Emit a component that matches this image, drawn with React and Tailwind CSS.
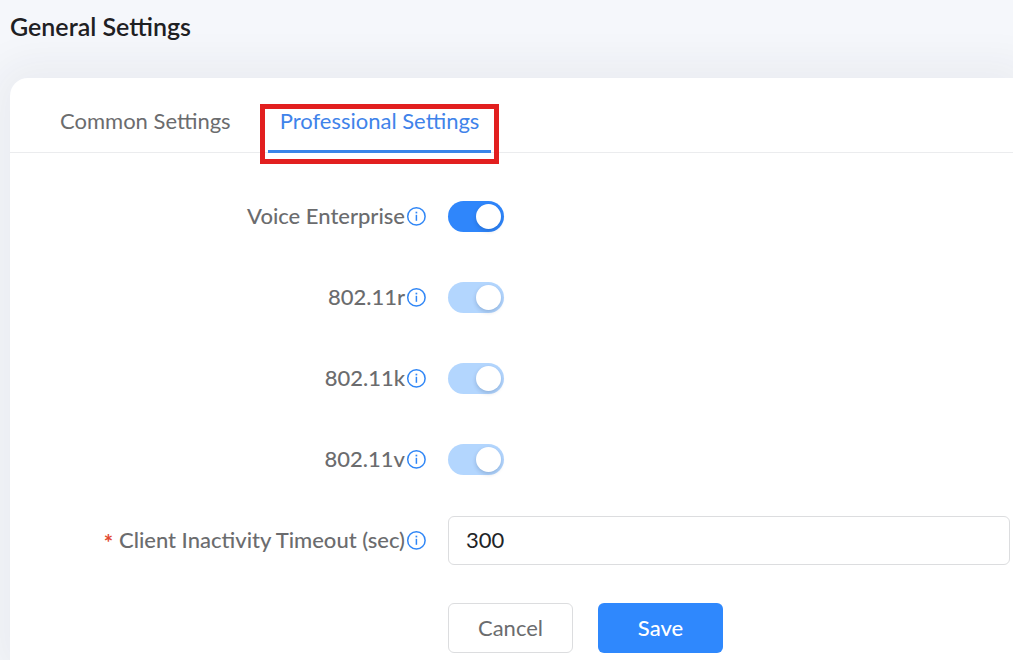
import { useState } from 'react';

const InfoIcon = () => (
	<svg
		className="size-5 shrink-0 text-[#2f86f6]"
		viewBox="0 0 20 20"
		fill="none"
		stroke="currentColor"
		strokeWidth="1.5"
		aria-hidden="true"
	>
		<circle cx="10.4" cy="10.4" r="8.7" />
		<path d="M10.4 8.8v6" />
		<path d="M10.4 5.7v1.7" strokeWidth="1.7" />
	</svg>
);

const FieldLabel = ({ htmlFor, required, children }) => (
	<label
		htmlFor={htmlFor}
		className="flex items-center justify-end pb-0.5 text-[22px] leading-7 font-medium text-[#6b6c6e]"
	>
		{required && (
			<span className="mr-1.5 pt-1.5 font-bold text-[#e2492f]">*</span>
		)}
		<span className="mr-px">{children}</span>
		<InfoIcon />
	</label>
);

const Toggle = ({ id, checked, disabled, onChange }) => (
	<input
		id={id}
		type="checkbox"
		role="switch"
		checked={checked}
		disabled={disabled}
		onChange={onChange}
		className="flex h-[31px] w-14 appearance-none items-center rounded-full bg-gray-300 px-[3px]
			before:size-[25px] before:rounded-full before:bg-white before:shadow-[0_2px_4px_rgba(0,35,80,0.2)]
			checked:justify-end checked:bg-[#2f86fb] disabled:checked:bg-[#b3d6fe]
		"
	/>
);

const App = () => {
	const [voiceEnterprise, setVoiceEnterprise] = useState(true);
	const [timeout, setTimeoutValue] = useState('300');

	// 802.11r/k/v follow Voice Enterprise and can't be changed while it is on
	const [standards, setStandards] = useState({
		'802.11r': true,
		'802.11k': true,
		'802.11v': true
	});

	return (
		<div className="flex min-h-screen flex-col bg-[#f5f7fb] font-['Lato',sans-serif]">
			<header className="px-[10px] pt-[10px] pb-9">
				<h1 className="text-[25px] leading-8 font-semibold text-[#1e2023]">
					General Settings
				</h1>
			</header>

			<main className="ml-[10px] grow rounded-tl-[18px] bg-white shadow-[0_0_40px_16px_rgba(40,40,60,0.05)]">
				<nav className="flex gap-[25px] border-b border-[#ebecee] pl-[38px] text-[22px] leading-7">
					<a href="#common" className="px-3 pt-[29px] pb-[17px] text-[#6b6c6e]">
						Common Settings
					</a>
					<a
						href="#professional"
						aria-current="page"
						className="relative -mb-px border-b-3 border-[#3a85e8] px-3 pt-[29px] pb-[15px] text-[#3f83ea]"
					>
						Professional Settings
						<span className="absolute -inset-x-2 top-[26px] -bottom-[14px] border-5 border-[#e21f1f]" />
					</a>
				</nav>

				<form
					className="pt-[39px] pr-[3px] pb-[7px]"
					onSubmit={e => e.preventDefault()}
				>
					<div className="grid auto-rows-[49px] grid-cols-[416px_1fr] items-center gap-x-[22px] gap-y-8">
						<FieldLabel htmlFor="voice">Voice Enterprise</FieldLabel>
						<Toggle
							id="voice"
							checked={voiceEnterprise}
							onChange={e => setVoiceEnterprise(e.target.checked)}
						/>

						{Object.keys(standards).map(name => (
							<div className="col-span-2 grid grid-cols-subgrid items-center" key={name}>
								<FieldLabel htmlFor={name}>{name}</FieldLabel>
								<Toggle
									id={name}
									checked={standards[name]}
									disabled={voiceEnterprise}
									onChange={e =>
										setStandards({ ...standards, [name]: e.target.checked })
									}
								/>
							</div>
						))}

						<FieldLabel htmlFor="timeout" required>
							Client Inactivity Timeout (sec)
						</FieldLabel>
						<input
							id="timeout"
							type="text"
							value={timeout}
							onChange={e => setTimeoutValue(e.target.value)}
							className="h-full w-full rounded-md border border-[#dcdddf] bg-white px-[17px] pb-0.5 text-[22px] leading-7 text-[#222427]"
						/>
					</div>

					<div className="mt-[38px] flex gap-[25px] pl-[438px] text-[22px] leading-7">
						<button
							type="button"
							className="h-[50px] w-[125px] rounded-md border border-[#dcdddf] bg-white text-[#6b6c6e]"
						>
							Cancel
						</button>
						<button
							type="submit"
							className="h-[50px] w-[125px] rounded-md bg-[#2f88fd] font-medium text-white"
						>
							Save
						</button>
					</div>
				</form>
			</main>
		</div>
	);
};

export default App;
